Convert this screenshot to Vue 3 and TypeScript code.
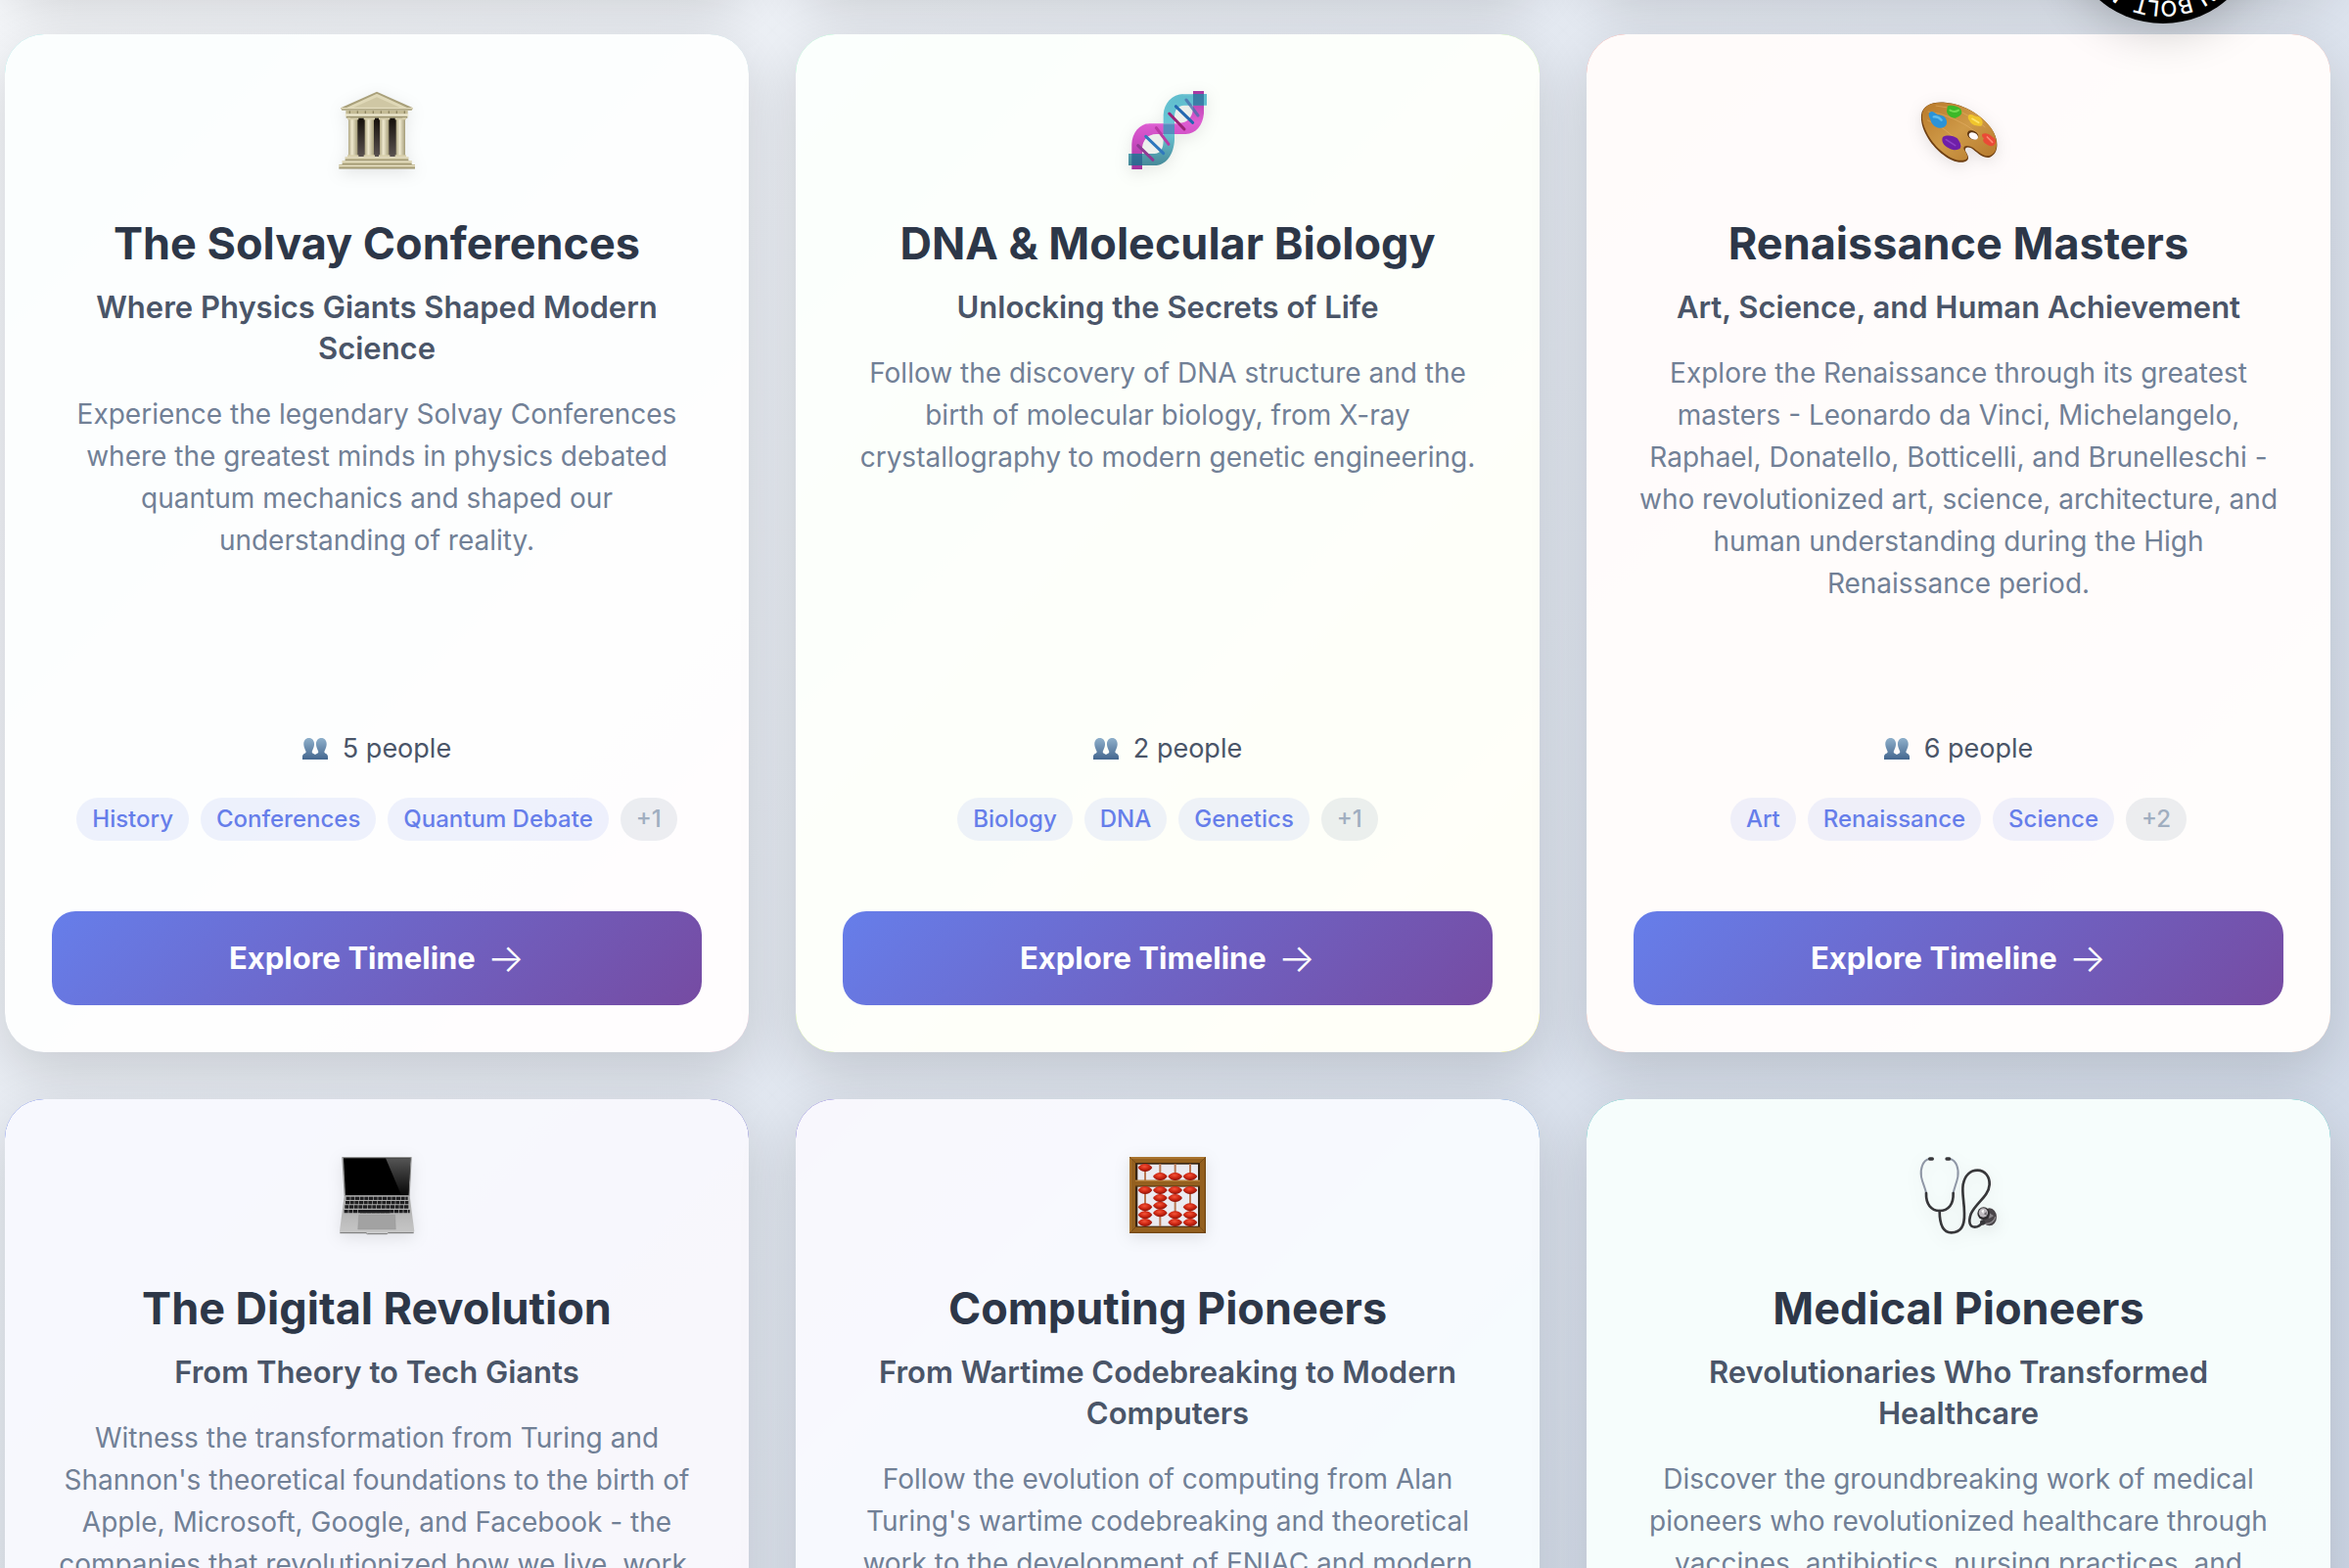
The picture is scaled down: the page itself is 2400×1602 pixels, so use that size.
<script setup lang="ts">
interface Topic {
  id: string
  title: string
  subtitle: string
  description: string
  people?: number
  tags?: string[]
  more?: number
  from: string
  to: string
}

const topics: Topic[] = [
  {
    id: 'temple',
    title: 'The Solvay Conferences',
    subtitle: 'Where Physics Giants Shaped Modern Science',
    description:
      'Experience the legendary Solvay Conferences where the greatest minds in physics debated quantum mechanics and shaped our understanding of reality.',
    people: 5,
    tags: ['History', 'Conferences', 'Quantum Debate'],
    more: 1,
    from: '#a8edea',
    to: '#fed6e3',
  },
  {
    id: 'dna',
    title: 'DNA & Molecular Biology',
    subtitle: 'Unlocking the Secrets of Life',
    description:
      'Follow the discovery of DNA structure and the birth of molecular biology, from X-ray crystallography to modern genetic engineering.',
    people: 2,
    tags: ['Biology', 'DNA', 'Genetics'],
    more: 1,
    from: '#a8ffd0',
    to: '#fffb70',
  },
  {
    id: 'palette',
    title: 'Renaissance Masters',
    subtitle: 'Art, Science, and Human Achievement',
    description:
      'Explore the Renaissance through its greatest masters - Leonardo da Vinci, Michelangelo, Raphael, Donatello, Botticelli, and Brunelleschi - who revolutionized art, science, architecture, and human understanding during the High Renaissance period.',
    people: 6,
    tags: ['Art', 'Renaissance', 'Science'],
    more: 2,
    from: '#ffa8a0',
    to: '#fcd5c4',
  },
  {
    id: 'laptop',
    title: 'The Digital Revolution',
    subtitle: 'From Theory to Tech Giants',
    description:
      "Witness the transformation from Turing and Shannon's theoretical foundations to the birth of Apple, Microsoft, Google, and Facebook - the companies that revolutionized how we live, work,",
    from: '#667eea',
    to: '#764ba2',
  },
  {
    id: 'abacus',
    title: 'Computing Pioneers',
    subtitle: 'From Wartime Codebreaking to Modern Computers',
    description:
      "Follow the evolution of computing from Alan Turing's wartime codebreaking and theoretical work to the development of ENIAC and modern",
    from: '#7c68d8',
    to: '#3cdcf0',
  },
  {
    id: 'stethoscope',
    title: 'Medical Pioneers',
    subtitle: 'Revolutionaries Who Transformed Healthcare',
    description:
      'Discover the groundbreaking work of medical pioneers who revolutionized healthcare through vaccines, antibiotics, nursing practices, and',
    from: '#4ecdc4',
    to: '#52c8c4',
  },
]

const columns = [88, 134, 180, 226]
const beads: [number, number][] = [
  [90, 84], [136, 111], [182, 111], [228, 111],
  [90, 153], [136, 153], [182, 153], [228, 153],
  [136, 177], [182, 177], [136, 200], [136, 223],
  [90, 205], [90, 229], [90, 252],
  [182, 229], [182, 252],
  [228, 205], [228, 229], [228, 252],
]
const keyRows = [178, 191, 204, 218]
const pillars = [91, 141, 187, 237]
</script>

<template>
  <main class="page">
    <section class="grid">
      <div v-for="n in 3" :key="n" class="card card-above"></div>

      <article
        v-for="topic in topics"
        :key="topic.id"
        class="card"
        :style="{ '--from': topic.from, '--to': topic.to }"
      >
        <svg v-if="topic.id === 'temple'" class="icon" viewBox="9 9 312 312" aria-hidden="true">
          <defs>
            <linearGradient id="stone" x1="0" x2="1">
              <stop offset="0" stop-color="#b0a884" />
              <stop offset=".4" stop-color="#efe9cf" />
              <stop offset="1" stop-color="#a49c78" />
            </linearGradient>
            <linearGradient id="hall" x1="0" y1="0" x2="0" y2="1">
              <stop offset="0" stop-color="#15100a" />
              <stop offset="1" stop-color="#5a5250" />
            </linearGradient>
          </defs>
          <path d="M165 41 L276 91 L272 98 H58 L54 91 Z" fill="#a9a07a" />
          <path d="M165 47 L258 90 H72 Z" fill="#e0d9b8" />
          <path d="M165 58 L236 89 H94 Z" fill="#cfc7a4" />
          <path d="M56 92 H275" stroke="#f0ead0" stroke-width="3" />
          <rect x="70" y="98" width="190" height="12" fill="#c4bb95" />
          <path d="M80 104 H252" stroke="#8f8763" stroke-width="8" stroke-dasharray="4 20" />
          <rect x="68" y="110" width="194" height="6" fill="#efe9cd" />
          <rect x="71" y="116" width="188" height="6" fill="#a0976f" />
          <rect x="84" y="122" width="160" height="118" fill="url(#hall)" />
          <g v-for="x in pillars" :key="x">
            <rect :x="x - 13" y="126" width="28" height="112" fill="url(#stone)" />
            <rect :x="x - 16" y="121" width="34" height="6" fill="#d8d0ac" />
            <rect :x="x - 16" y="235" width="34" height="7" fill="#d8d0ac" />
          </g>
          <rect x="68" y="241" width="194" height="11" fill="#c3ba94" />
          <rect x="59" y="252" width="213" height="12" fill="#cbc29d" />
          <rect x="49" y="264" width="233" height="13" fill="#bcb38c" />
          <path d="M68 243 H262 M59 255 H272 M49 268 H282" stroke="#f3edd4" stroke-width="3" />
          <path d="M68 251 H262 M59 263 H272 M49 276 H282" stroke="#857d5b" stroke-width="2" />
        </svg>

        <svg v-else-if="topic.id === 'dna'" class="icon" viewBox="3 9 312 312" aria-hidden="true">
          <defs>
            <linearGradient id="pink" x1="0" y1="0" x2="0" y2="1">
              <stop offset="0" stop-color="#a32c9c" />
              <stop offset=".4" stop-color="#dc55cf" />
              <stop offset=".6" stop-color="#cc45c2" />
              <stop offset="1" stop-color="#9c2a97" />
            </linearGradient>
            <linearGradient id="teal" x1="0" y1="0" x2="0" y2="1">
              <stop offset="0" stop-color="#4fb6c8" />
              <stop offset=".5" stop-color="#5cc4d4" />
              <stop offset="1" stop-color="#357f90" />
            </linearGradient>
          </defs>
          <path
            d="M237 39 H270 V108 C266 146 246 169 214 171 H124 C98 172 84 188 81 212 V279 H49 V202 C50 168 72 139 104 138 H190 C222 137 238 118 237 84 Z"
            fill="url(#pink)"
            opacity=".95"
          />
          <path
            d="M279 48 V83 H210 C189 84 181 96 180 118 V188 C178 232 156 264 124 267 H39 V231 H118 C138 230 146 216 146 188 V112 C148 76 172 49 208 48 Z"
            fill="url(#teal)"
            opacity=".9"
          />
          <path d="M146 138 H180 V171 H146 Z" fill="#4f77b6" opacity=".65" />
          <path d="M237 48 H270 V83 H237 Z M49 231 H81 V267 H49 Z" fill="#255f91" opacity=".6" />
          <g stroke-width="9" stroke-linecap="round">
            <path d="M184 86 L236 136" stroke="#2367b0" />
            <path d="M216 66 L252 114" stroke="#4a6fae" opacity=".8" />
            <path d="M164 108 L210 156" stroke="#9c2377" />
            <path d="M92 178 L146 230" stroke="#2f78bd" />
            <path d="M124 152 L162 202" stroke="#b83aa5" />
            <path d="M68 206 L114 250" stroke="#8f3a94" />
          </g>
          <path d="M94 140 H190 M206 50 H236" stroke="#fff" stroke-width="3" opacity=".25" />
        </svg>

        <svg v-else-if="topic.id === 'palette'" class="icon" viewBox="12 9 312 312" aria-hidden="true">
          <defs>
            <linearGradient id="wood" x1="0" y1="0" x2="1" y2="1">
              <stop offset="0" stop-color="#b8792a" />
              <stop offset=".5" stop-color="#cf9a48" />
              <stop offset="1" stop-color="#b4782b" />
            </linearGradient>
          </defs>
          <path
            d="M54 112 C58 82 90 70 128 74 C186 78 250 118 276 166 C292 196 290 232 264 242 C246 246 230 232 214 219 C198 206 184 212 190 224 C200 240 204 252 182 257 C148 262 100 224 76 186 C60 160 52 136 54 112 Z"
            fill="#6e3f12"
          />
          <path
            d="M57 108 C60 82 92 71 128 75 C186 79 248 116 274 162 C290 192 290 228 264 237 C248 241 232 228 216 215 C198 202 178 206 186 220 C196 236 202 248 182 251 C150 256 104 220 80 182 C64 156 54 130 57 108 Z"
            fill="url(#wood)"
          />
          <path d="M74 102 Q150 110 230 170 M72 128 Q130 150 180 208 M98 84 Q180 90 250 150" fill="none" stroke="#ebb96e" stroke-width="3" opacity=".45" />
          <ellipse cx="212" cy="174" rx="18" ry="13" transform="rotate(28 212 174)" fill="#5b3410" />
          <ellipse cx="214" cy="177" rx="15" ry="10" transform="rotate(28 214 177)" fill="#fffafa" />
          <path d="M80 104 C88 98 98 108 104 112 C118 112 130 118 132 132 C134 146 122 154 108 152 C94 150 84 138 82 126 C78 118 74 110 80 104 Z" fill="#2b93d8" />
          <path d="M92 118 Q106 116 116 128" fill="none" stroke="#5fbcec" stroke-width="7" stroke-linecap="round" />
          <path d="M134 86 C142 80 166 84 174 94 C184 108 174 116 158 122 C144 122 134 112 132 102 Z" fill="#3cb828" />
          <path d="M142 98 Q156 106 168 98" fill="none" stroke="#74dc52" stroke-width="6" stroke-linecap="round" />
          <path d="M200 112 C210 108 218 118 230 118 C242 124 246 138 238 146 C222 148 206 142 202 130 C196 124 196 116 200 112 Z" fill="#f0c52d" />
          <path d="M210 124 L230 136" stroke="#ffe468" stroke-width="5" stroke-linecap="round" />
          <path d="M120 180 C132 172 154 176 164 184 C172 194 180 208 172 216 C158 222 146 220 138 214 C122 206 114 192 120 180 Z" fill="#6f1fa8" />
          <path d="M130 188 L158 206" stroke="#8e42c6" stroke-width="5" stroke-linecap="round" />
          <path d="M242 170 C256 164 268 176 278 184 C286 194 280 208 268 208 C250 204 238 192 246 184 C240 180 238 174 242 170 Z" fill="#ea4a36" />
          <path d="M256 180 L272 196" stroke="#ff8874" stroke-width="5" stroke-linecap="round" />
        </svg>

        <svg v-else-if="topic.id === 'laptop'" class="icon" viewBox="9 18 312 312" aria-hidden="true">
          <defs>
            <linearGradient id="deck" x1="0" y1="0" x2="0" y2="1">
              <stop offset="0" stop-color="#a9a9a9" />
              <stop offset="1" stop-color="#c6c6c6" />
            </linearGradient>
            <linearGradient id="glare" x1="0" y1="0" x2="0" y2="1">
              <stop offset="0" stop-color="#555" />
              <stop offset="1" stop-color="#080808" />
            </linearGradient>
          </defs>
          <path d="M60 51 H270 Q273 51 272 55 L266 171 H65 L58 55 Q57 51 60 51 Z" fill="#909090" />
          <path d="M63 55 H268 L262 168 H69 Z" fill="#000" />
          <path d="M192 55 H268 L262 168 H240 Z" fill="url(#glare)" />
          <path d="M65 171 H266 L280 278 Q280 284 274 284 H56 Q50 284 51 278 Z" fill="url(#deck)" />
          <g stroke="#1e1e20" stroke-width="10" stroke-dasharray="12 2">
            <path v-for="(y, i) in keyRows" :key="y" :d="`M${71 - i * 2} ${y} H${260 + i * 2}`" />
          </g>
          <path d="M114 218 H206" stroke="#1e1e20" stroke-width="10" />
          <path d="M110 229 H221 L223 273 H107 Z" fill="#a2a2a2" stroke="#8e8e8e" stroke-width="1" />
          <path d="M52 284 H132 L136 287 H196 L200 284 H278" fill="none" stroke="#727272" stroke-width="3" />
        </svg>

        <svg v-else-if="topic.id === 'abacus'" class="icon" viewBox="3 18 312 312" aria-hidden="true">
          <defs>
            <radialGradient id="bead" cx=".45" cy=".35" r=".65">
              <stop offset="0" stop-color="#f4553a" />
              <stop offset=".5" stop-color="#cf2814" />
              <stop offset="1" stop-color="#8a1208" />
            </radialGradient>
          </defs>
          <rect x="42" y="51" width="234" height="234" fill="#94601f" />
          <rect x="60" y="69" width="198" height="197" fill="#3a2510" />
          <rect x="67" y="74" width="185" height="189" fill="#ebeaf0" />
          <g stroke="#b97955" stroke-width="6">
            <path v-for="x in columns" :key="x" :d="`M${x + 2} 72 V264`" />
          </g>
          <rect x="60" y="122" width="198" height="20" fill="#94601f" />
          <path d="M60 124 H258" stroke="#c08a40" stroke-width="3" />
          <path d="M60 141 H258" stroke="#4a2d0c" stroke-width="3" />
          <path d="M44 54 H274 M45 54 V282" stroke="#b07a34" stroke-width="4" />
          <path d="M44 283 H275 M274 54 V283" stroke="#6b420f" stroke-width="3" />
          <path d="M42 51 L62 70 M276 51 L257 70 M42 285 L62 265 M276 285 L257 265" stroke="#6b420f" stroke-width="2" />
          <path
            v-for="([x, y], i) in beads"
            :key="i"
            :d="`M${x - 22} ${y} Q${x - 14} ${y - 12} ${x} ${y - 12} Q${x + 14} ${y - 12} ${x + 22} ${y} Q${x + 14} ${y + 12} ${x} ${y + 12} Q${x - 14} ${y + 12} ${x - 22} ${y} Z`"
            fill="url(#bead)"
          />
        </svg>

        <svg v-else class="icon" viewBox="12 18 312 312" aria-hidden="true">
          <g fill="none" stroke-linecap="round">
            <path d="M78 57 C58 62 50 88 54 112 C58 132 66 146 69 162" stroke="#8f97a6" stroke-width="6" />
            <path d="M142 57 C162 62 170 88 166 112 C162 132 155 146 152 162" stroke="#8f97a6" stroke-width="6" />
            <path d="M69 162 C68 196 84 216 110 216 C138 216 153 196 152 162" stroke="#37373a" stroke-width="8" />
            <path
              d="M110 216 C110 258 122 283 146 283 C176 283 187 262 186 224 C186 186 178 166 182 136 C188 106 206 92 226 92 C250 92 264 112 263 136 C260 174 222 190 206 226 C198 250 202 266 218 266 C230 266 236 260 242 250"
              stroke="#37373a"
              stroke-width="8"
            />
            <path d="M80 57 H88 M132 57 H140" stroke="#37373a" stroke-width="10" />
          </g>
          <ellipse cx="263" cy="235" rx="22" ry="27" fill="#4a464a" />
          <path d="M252 256 Q274 256 282 234" fill="none" stroke="#8e8a8e" stroke-width="4" />
          <path d="M262 222 L276 232 L262 240 Z" fill="#8a868b" />
          <circle cx="245" cy="224" r="19" fill="#2f2d30" />
          <circle cx="244" cy="222" r="14" fill="#bdb9be" />
          <path d="M238 216 L246 212 L244 226 Z" fill="#fff" />
          <path d="M246 226 L254 218 L254 230 Z" fill="#6b676c" />
          <circle cx="242" cy="252" r="8" fill="#37373a" />
        </svg>

        <h3 class="title">{{ topic.title }}</h3>
        <p class="subtitle">{{ topic.subtitle }}</p>
        <p class="description">{{ topic.description }}</p>

        <template v-if="topic.tags">
          <div class="people">
            <svg class="people-icon" viewBox="0 0 78 66" aria-hidden="true">
              <defs>
                <linearGradient id="bust" x1="0" y1="0" x2="0" y2="1">
                  <stop offset="0" stop-color="#8fb0cb" />
                  <stop offset="1" stop-color="#44678f" />
                </linearGradient>
              </defs>
              <path
                d="M20 0 C31 0 37 9 36 21 C35 31 31 36 29 42 C29 47 34 48 39 51 C44 48 49 47 49 42 C47 36 43 31 42 21 C41 9 47 0 58 0 C69 0 75 9 74 21 C73 31 69 36 67 42 C67 49 78 47 78 57 V66 H0 V57 C0 47 11 49 11 42 C9 36 5 31 4 21 C3 9 9 0 20 0 Z"
                fill="url(#bust)"
              />
            </svg>
            <span>{{ topic.people }} people</span>
          </div>
          <ul class="tags">
            <li v-for="tag in topic.tags" :key="tag" class="tag">{{ tag }}</li>
            <li class="tag tag-more">+{{ topic.more }}</li>
          </ul>
          <button class="explore" type="button">
            <span>Explore Timeline</span>
            <span class="arrow">→</span>
          </button>
        </template>
      </article>
    </section>

    <a class="badge" href="#" aria-label="Made in Bolt">
      <svg viewBox="0 0 200 200">
        <defs>
          <path id="ring" d="M177 100 A77 77 0 0 1 23 100" />
        </defs>
        <circle cx="100" cy="100" r="100" fill="#000" />
        <text class="badge-text">
          <textPath href="#ring" startOffset="64">IN BOLT. NEW</textPath>
        </text>
      </svg>
    </a>
  </main>
</template>

<style>
body {
  margin: 0;
}
</style>

<style scoped>
.page {
  position: relative;
  height: 100vh;
  overflow: hidden;
  background: linear-gradient(135deg, #f5f7fa 0%, #c3cfe2 130%);
  font-family: Inter, "Liberation Sans", sans-serif;
}

.grid {
  display: grid;
  grid-template-columns: repeat(3, 1fr);
  gap: 48px;
  margin: -213px 19px 0 5px;
}

.card {
  position: relative;
  isolation: isolate;
  box-sizing: border-box;
  display: flex;
  flex-direction: column;
  align-items: center;
  min-height: 1040px;
  padding: 48px;
  border-radius: 40px;
  overflow: hidden;
  background: linear-gradient(135deg, var(--from), var(--to));
  box-shadow: 0 20px 60px rgba(0, 0, 0, 0.15);
  text-align: center;
}

.card::before {
  content: "";
  position: absolute;
  inset: 0;
  z-index: -1;
  border-radius: 40px;
  background: rgba(255, 255, 255, 0.95);
}

.card-above {
  min-height: 200px;
  background: #fff;
}

.icon {
  width: 104px;
  height: 104px;
  flex: none;
  overflow: visible;
  filter: drop-shadow(0 4px 8px rgba(0, 0, 0, 0.1));
}

.title {
  margin: 33px 0 0;
  font-size: 45px;
  line-height: 58px;
  font-weight: 700;
  color: #2d3748;
}

.subtitle {
  margin: 15px 0 0;
  font-size: 31px;
  line-height: 42px;
  font-weight: 600;
  color: #4a5568;
}

.description {
  margin: 25px 0 0;
  font-size: 28px;
  line-height: 43px;
  color: #718096;
}

.people {
  display: flex;
  align-items: center;
  gap: 15px;
  margin-top: auto;
  font-size: 27px;
  line-height: 36px;
  color: #4a5568;
}

.people-icon {
  width: 26px;
  height: 22px;
}

.tags {
  display: flex;
  flex-wrap: wrap;
  justify-content: center;
  gap: 12px;
  margin: 32px 0 72px;
  padding: 0;
  list-style: none;
}

.tag {
  padding: 0 16px;
  border-radius: 24px;
  background: rgba(102, 126, 234, 0.1);
  font-size: 24px;
  line-height: 44px;
  font-weight: 500;
  color: #667eea;
}

.tag-more {
  background: rgba(160, 174, 192, 0.2);
  color: #a0aec0;
}

.explore {
  display: flex;
  align-items: center;
  justify-content: center;
  gap: 12px;
  width: 100%;
  height: 96px;
  padding: 0;
  border: 0;
  border-radius: 24px;
  background: linear-gradient(135deg, #667eea 0%, #764ba2 100%);
  font-family: inherit;
  font-size: 31px;
  line-height: 40px;
  font-weight: 700;
  color: #fff;
}

.arrow {
  font-size: 40px;
  font-weight: 300;
}

.badge {
  position: absolute;
  top: -176px;
  right: 90px;
  width: 200px;
  height: 200px;
  border-radius: 50%;
  box-shadow: 0 8px 48px rgba(0, 0, 0, 0.2);
}

.badge svg {
  display: block;
  width: 100%;
  height: 100%;
}

.badge-text {
  font-size: 22px;
  font-weight: 500;
  fill: #fff;
}
</style>
